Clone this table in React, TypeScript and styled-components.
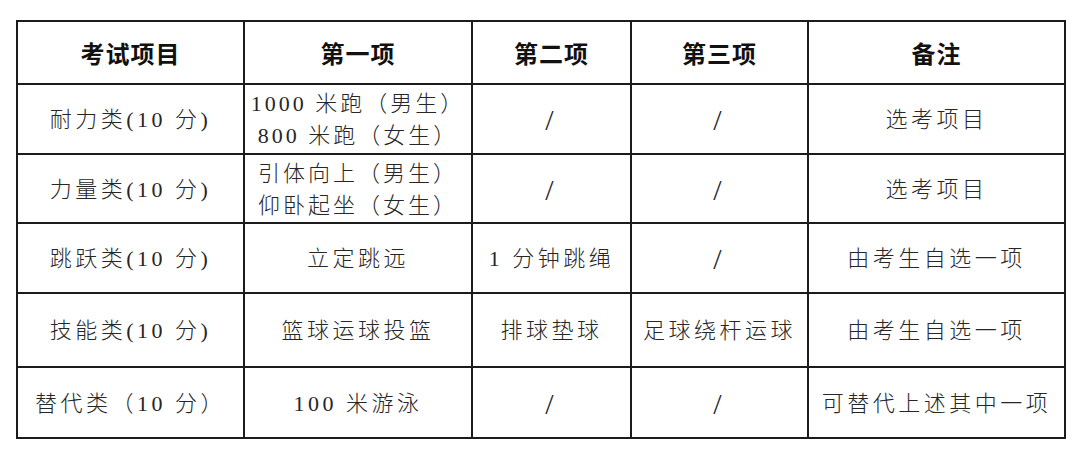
import React from "react";
import styled, { createGlobalStyle } from "styled-components";

const GlobalStyle = createGlobalStyle`
  html, body {
    margin: 0;
    padding: 0;
    background: #ffffff;
  }
  body {
    font-family: "Liberation Serif", "Noto Sans CJK SC", serif;
  }
`;

const Page = styled.div`
  padding: 20px 0 0 16px;
`;

const Table = styled.div`
  display: grid;
  grid-template-columns: 227px 228px 159px 177px 257px;
  grid-template-rows: 63px 70px 69px 70px 74px 71px;
  width: max-content;
  border-left: 2px solid #1b1b1b;
  border-top: 2px solid #1b1b1b;
`;

const Cell = styled.div<{ $head?: boolean }>`
  box-sizing: border-box;
  display: flex;
  flex-direction: column;
  align-items: center;
  justify-content: center;
  text-align: center;
  border-right: 2px solid #1b1b1b;
  border-bottom: 2px solid #1b1b1b;
  white-space: nowrap;
  color: ${(p) => (p.$head ? "#111111" : "#262626")};
  font-family: ${(p) =>
    p.$head
      ? `"Noto Sans CJK SC", sans-serif`
      : `"Liberation Serif", "Noto Sans CJK SC", serif`};
  font-size: ${(p) => (p.$head ? "24px" : "22px")};
  font-weight: ${(p) => (p.$head ? 700 : 300)};
  letter-spacing: ${(p) => (p.$head ? "1px" : "3.5px")};
  line-height: 32px;
  padding-top: ${(p) => (p.$head ? "0" : "2px")};
`;

const Line = styled.span`
  display: block;
  letter-spacing: 3px;
`;

const Slash = styled.span`
  font-family: "Liberation Serif", serif;
  font-size: 30px;
  line-height: 30px;
  color: #2a2a2a;
  letter-spacing: 0;
  padding-right: 4px;
`;

type Row = (string | string[])[];

const headers = ["考试项目", "第一项", "第二项", "第三项", "备注"];

const rows: Row[] = [
  ["耐力类(10 分)", ["1000 米跑（男生）", "800 米跑（女生）"], "/", "/", "选考项目"],
  ["力量类(10 分)", ["引体向上（男生）", "仰卧起坐（女生）"], "/", "/", "选考项目"],
  ["跳跃类(10 分)", "立定跳远", "1 分钟跳绳", "/", "由考生自选一项"],
  ["技能类(10 分)", "篮球运球投篮", "排球垫球", "足球绕杆运球", "由考生自选一项"],
  ["替代类（10 分）", "100 米游泳", "/", "/", "可替代上述其中一项"],
];

const renderContent = (value: string | string[]) => {
  if (Array.isArray(value)) {
    return value.map((line) => <Line key={line}>{line}</Line>);
  }
  if (value === "/") return <Slash>/</Slash>;
  return value;
};

export default function App() {
  return (
    <>
      <GlobalStyle />
      <Page>
        <Table>
          {headers.map((h) => (
            <Cell $head key={h}>
              {h}
            </Cell>
          ))}
          {rows.map((row, r) =>
            row.map((value, c) => (
              <Cell key={`${r}-${c}`}>{renderContent(value)}</Cell>
            ))
          )}
        </Table>
      </Page>
    </>
  );
}
